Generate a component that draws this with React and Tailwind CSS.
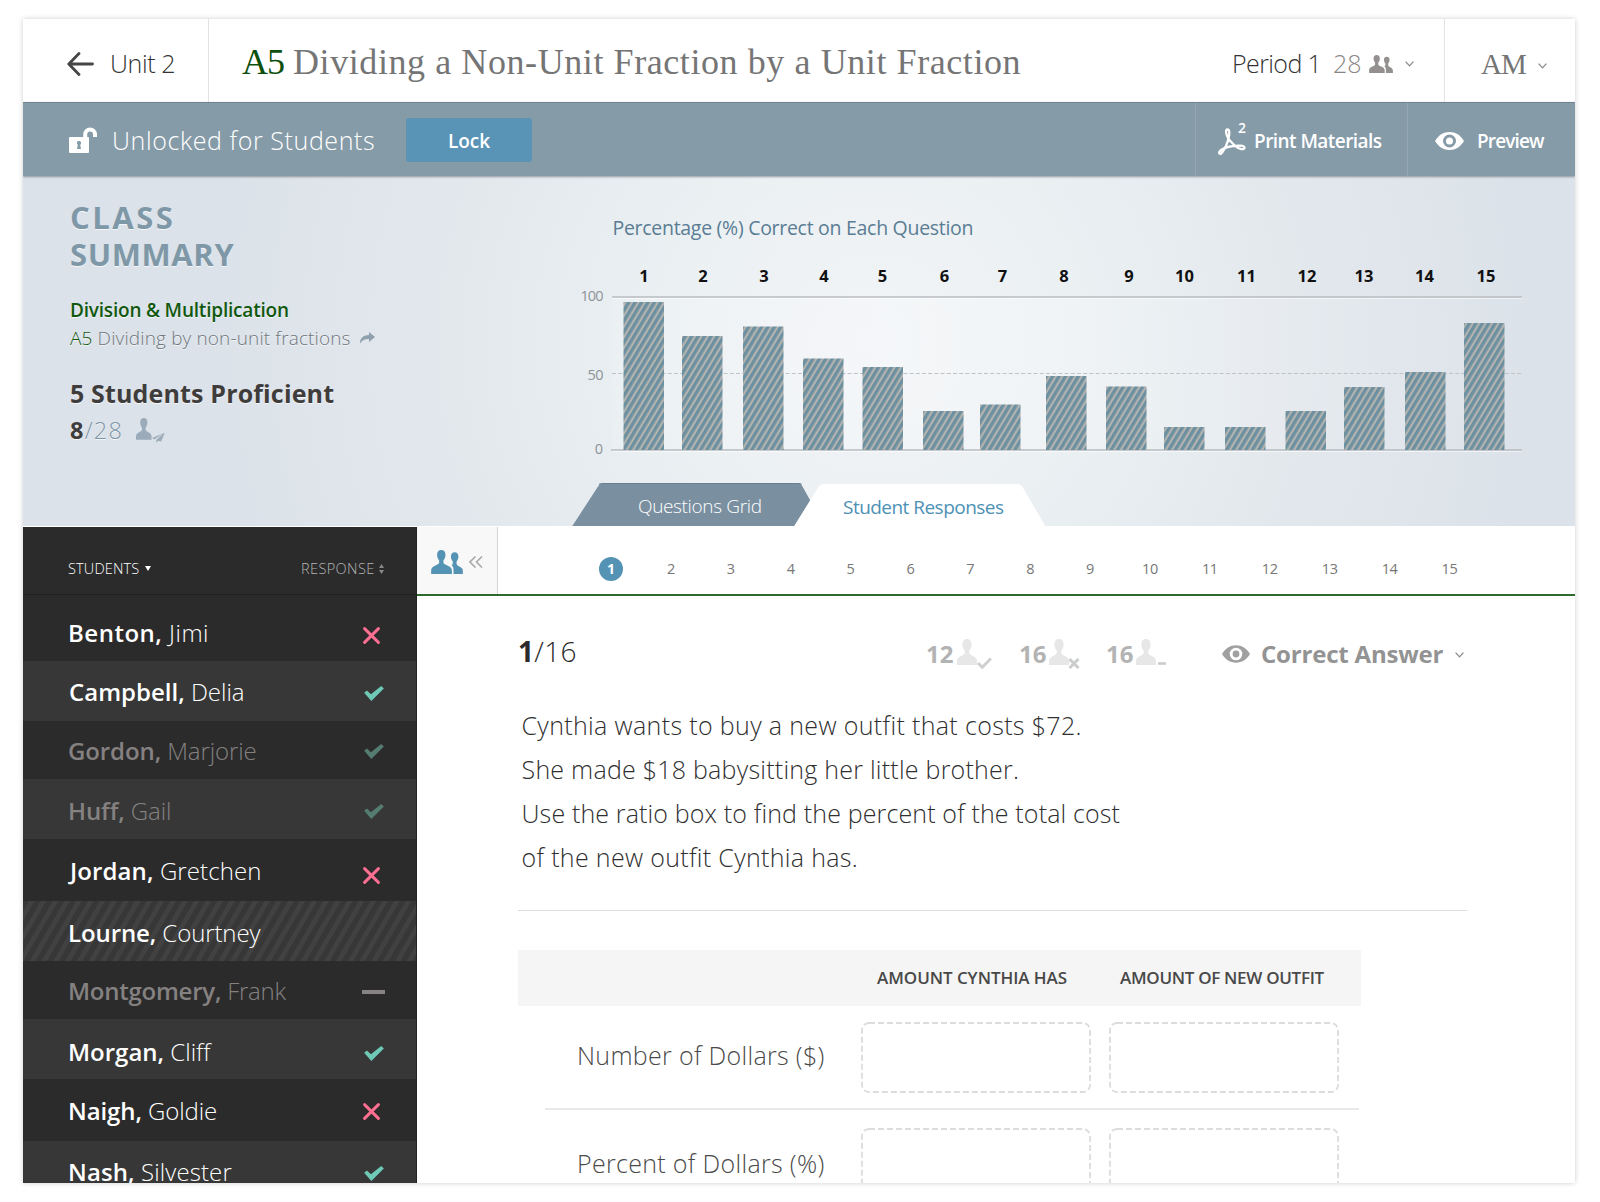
const QUESTIONS = [
  { n: 1, cx: 644, x: 623.5, top: 302 },
  { n: 2, cx: 703, x: 682, top: 336 },
  { n: 3, cx: 764, x: 743, top: 326.5 },
  { n: 4, cx: 824, x: 803, top: 358.5 },
  { n: 5, cx: 882.5, x: 862.5, top: 367 },
  { n: 6, cx: 944.5, x: 923, top: 411 },
  { n: 7, cx: 1002.5, x: 980, top: 404.5 },
  { n: 8, cx: 1064, x: 1046, top: 376 },
  { n: 9, cx: 1129, x: 1106, top: 386.5 },
  { n: 10, cx: 1184.5, x: 1164, top: 427 },
  { n: 11, cx: 1246.5, x: 1225, top: 427 },
  { n: 12, cx: 1307, x: 1285.5, top: 411 },
  { n: 13, cx: 1364, x: 1344, top: 387 },
  { n: 14, cx: 1424.5, x: 1405, top: 372 },
  { n: 15, cx: 1486, x: 1464, top: 323 },
];

const STUDENTS = [
  { last: 'Benton', first: 'Jimi', mark: 'cross', row: 'h-[66px] pt-[9px] bg-[#2b2b2b]', name: 'tracking-[0.5px]', markClass: 'mt-[5px]' },
  { last: 'Campbell', first: 'Delia', mark: 'check', row: 'h-[60px] bg-[#373737]', name: 'pl-px', markClass: 'mt-[5px]' },
  { last: 'Gordon', first: 'Marjorie', mark: 'check', dim: true, row: 'h-[58px] bg-[#2b2b2b]', name: 'tracking-[-0.1px]' },
  { last: 'Huff', first: 'Gail', mark: 'check', dim: true, row: 'h-[60px] pt-[2px] bg-[#373737]', name: 'tracking-[-0.1px]' },
  { last: 'Jordan', first: 'Gretchen', mark: 'cross', row: 'h-[62px] pt-[1px] bg-[#2b2b2b]', name: 'pl-[2px] tracking-[0.1px]', markClass: 'mt-[9px]' },
  { last: 'Lourne', first: 'Courtney', row: 'h-[60px] pt-[2px] bg-[repeating-linear-gradient(120deg,#373737_0_5px,#414141_5.5px_9.8px,#373737_10.2px)]', name: 'tracking-[-0.1px]' },
  { last: 'Montgomery', first: 'Frank', mark: 'dash', dim: true, row: 'h-[58px] bg-[#2b2b2b]', name: 'tracking-[-0.25px]' },
  { last: 'Morgan', first: 'Cliff', mark: 'check', row: 'h-[60px] pt-[4px] bg-[#373737]', name: '', markClass: 'mt-[5px]' },
  { last: 'Naigh', first: 'Goldie', mark: 'cross', row: 'h-[62px] bg-[#2b2b2b]', name: 'tracking-[-0.1px]' },
  { last: 'Nash', first: 'Silvester', mark: 'check', row: 'h-[60px] bg-[#373737]', name: 'tracking-[0.1px]', markClass: 'mt-[5px]' },
];

const BUST = 'M10 0c-3 0-4.6 2-4.6 5.2 0 2.800 1 5 2.300 6.300v2.600C7.300 16.800 0 17.200 0 22v4h20v-4c0-4.800-7.300-5.200-7.700-7.900v-2.600c1.300-1.300 2.300-3.500 2.300-6.300C14.600 2 13 0 10 0z';

function People({ className }) {
  return (
    <svg className={className} viewBox="0 0 33 25" fill="currentColor">
      <path d="M10.500 0C7.700 0 6.200 1.900 6.200 5c0 2.600.9 4.500 2.100 5.700v2.600C7.800 16 0 16.300 0 21v4h21.600v-4c0-4.700-8.300-5-8.800-7.700v-2.600c1.200-1.200 2.100-3.100 2.100-5.700 0-3.100-1.500-5-4.400-5z" />
      <path d="M24.500 2.300c-2.500 0-3.900 1.700-3.900 4.400 0 2.300.8 3.900 1.900 5v2.600c0 .5-.5 1-1.200 1.400 1.300 1.200 2 2.800 2 5.300v4H33v-3.700c0-3.700-6-4-6.500-7v-2.600c1.100-1.100 1.900-2.700 1.900-5 0-2.700-1.400-4.400-3.900-4.400z" />
    </svg>
  );
}

function Person({ badge }) {
  return (
    <svg className="w-[35px] h-[30px] shrink-0" viewBox="0 0 35 30" fill="none">
      <path d={BUST} fill="#e7e7e7" />
      {badge === 'check' && <path d="M21 24l4.200 4.200L34 19.500" stroke="#cfcfcf" strokeWidth="3" />}
      {badge === 'cross' && <path d="M20.500 20l9 9m0-9l-9 9" stroke="#cbcccd" strokeWidth="3" />}
      {badge === 'dash' && <path d="M22 24.500h8" stroke="#cbcccd" strokeWidth="2.600" />}
    </svg>
  );
}

function Eye({ className, hole }) {
  return (
    <svg className={className} viewBox="0 0 29 18">
      <path d="M0 9C3.500 3.200 8.500 0 14.500 0S25.500 3.200 29 9c-3.500 5.800-8.500 9-14.500 9S3.500 14.800 0 9z" fill="currentColor" />
      <circle cx="14.500" cy="9" r="5" fill="none" stroke={hole} strokeWidth="3" />
    </svg>
  );
}

function Chevron({ className }) {
  return (
    <svg className={className} width="9" height="6" viewBox="0 0 9 6" fill="none" stroke="currentColor" strokeWidth="1.300">
      <path d="M.6.6l3.900 4.300L8.400.6" />
    </svg>
  );
}

function Mark({ type, dim }) {
  if (type === 'cross') {
    return (
      <svg className="block w-[17px] h-[17px]" viewBox="0 0 17 17" stroke="#ff6f91" strokeWidth="2.900" strokeLinecap="round">
        <path d="M1.600 1.600l13.800 13.800M15.400 1.600L1.600 15.400" />
      </svg>
    );
  }
  if (type === 'check') {
    return (
      <svg className="block ml-px w-[20px] h-[15px]" viewBox="0 0 21 16" fill={dim ? '#557c71' : '#6ec9b6'}>
        <path d="M0 7.200l3-2.300 4.200 4L18.200 0 21 2.700 7.700 16z" />
      </svg>
    );
  }
  if (type === 'dash') return <div className="-ml-px w-[23px] h-1 bg-[#878383]" />;
  return null;
}

function Header() {
  return (
    <header className="flex items-center h-[83px] bg-white">
      <div className="flex items-center w-[186px] h-full pl-[44px] pt-[7px] border-r border-[#e3e3e3]">
        <svg className="w-[27px] h-[24px]" viewBox="0 0 27 24" fill="none" stroke="#464646" strokeWidth="2.800" strokeLinecap="round" strokeLinejoin="round">
          <path d="M12 1.500L1.800 12 12 22.500M2 12h23.500" />
        </svg>
        <span className="ml-[16px] text-[25px] font-light text-[#333] tracking-[-0.4px] whitespace-nowrap">Unit 2</span>
      </div>
      <h1 className="flex-1 pl-[33px] pt-[2px] font-['Liberation_Serif',serif] text-[36px] text-[#757575] whitespace-nowrap">
        <span className="inline-block w-[51px] text-[#0d4f0d] tracking-[-1px]">A5</span>
        <span className="tracking-[0.58px]">Dividing a Non-Unit Fraction by a Unit Fraction</span>
      </h1>
      <div className="flex items-center w-[235px] h-full pt-[7px] text-[25px] font-light whitespace-nowrap border-r border-[#e3e3e3]">
        <span className="w-[101px] pl-[22px] box-content text-[#333] tracking-[-0.6px]">Period 1</span>
        <span className="w-[36px] text-[#8b8686]">28</span>
        <People className="w-[24px] h-[18px] text-[#959090]" />
        <Chevron className="ml-[12px] text-[#8a8a8a]" />
      </div>
      <div className="flex items-center w-[130px] h-full pt-[8px] pl-[36px]">
        <span className="w-[57px] font-['Liberation_Serif',serif] text-[29px] text-[#757575] tracking-[-1px]">AM</span>
        <Chevron className="mt-[2px] text-[#8a8a8a]" />
      </div>
    </header>
  );
}

function LockBar() {
  return (
    <div className="relative z-10 flex items-center h-[74px] bg-[#869ba8] border-t border-[#6f8391] shadow-[0_1px_2px_rgba(60,70,80,0.5)] text-white">
      <svg className="ml-[46px] w-[28px] h-[26px]" viewBox="0 0 28 26">
        <rect y="10" width="20" height="16" rx="1" fill="#fff" />
        <path d="M16.200 12V7.500a4.900 4.900 0 0 1 9.800 0V10" fill="none" stroke="#fff" strokeWidth="4" />
        <path d="M10 14a2 2 0 0 1 1.200 3.700l.8 4.300H8l.8-4.300A2 2 0 0 1 10 14z" fill="#869ba8" />
      </svg>
      <span className="ml-[15px] w-[294px] pt-[3px] text-[25px] font-light tracking-[0.6px] whitespace-nowrap">Unlocked for Students</span>
      <button className="w-[126px] h-[44px] mt-px pt-[3px] rounded-[3px] bg-[#5994b6] text-[19px] font-semibold">Lock</button>
      <div className="flex-1" />
      <div className="flex items-center w-[212px] h-full pl-[22px] border-l border-[#94a7b3]">
        <svg className="w-[28px] h-[28px] mt-[4px]" viewBox="0 0 28 28" fill="none" stroke="#fff" strokeWidth="2.300" strokeLinejoin="round">
          <path d="M9.800 9.500C8 6 7.200 1.500 9.500 1.500s2 4 1.200 8c-1.200 6-4.200 12-7 15.500-1.200 1.500-3.200.8-2.300-1.200 1.300-2.600 7.600-4.800 13-5.700 4.800-.8 12.100-1 12.100 1.600s-5.500 1.500-9-1.600c-3.300-2.900-6.200-5.900-7.700-8.600z" />
        </svg>
        <span className="-ml-[8px] -mt-[25px] w-[16px] text-[14px] font-semibold">2</span>
        <span className="pt-[4px] text-[19px] font-semibold tracking-[-0.55px] whitespace-nowrap">Print Materials</span>
      </div>
      <div className="flex items-center w-[168px] h-full pl-[27px] border-l border-[#94a7b3]">
        <Eye className="mt-[3px] w-[29px] h-[18px]" hole="#869ba8" />
        <span className="ml-[13px] pt-[3px] text-[19px] font-semibold tracking-[-0.85px]">Preview</span>
      </div>
    </div>
  );
}

function Chart() {
  return (
    <svg className="block shrink-0 w-[960px] h-[350px]" viewBox="565 176 960 350" fontFamily="'Open Sans', sans-serif">
      <defs>
        <pattern id="stripes" width="5.500" height="20" patternUnits="userSpaceOnUse" patternTransform="rotate(31)">
          <rect width="5.500" height="20" fill="#b3b3b1" />
          <rect width="3.300" height="20" fill="#6c909f" />
        </pattern>
        <linearGradient id="plot">
          <stop offset="0" stopColor="#fff" stopOpacity="0.1" />
          <stop offset=".35" stopColor="#fff" stopOpacity="0.25" />
          <stop offset="1" stopColor="#fff" stopOpacity="0" />
        </linearGradient>
      </defs>
      <text x="612.500" y="235" fontSize="19.500" fill="#5a7d93" textLength="361">Percentage (%) Correct on Each Question</text>
      <rect x="612" y="297" width="910" height="153" fill="url(#plot)" />
      <path d="M612 298.500h910M612 451.500h910" stroke="#fff" opacity="0.6" />
      <path d="M612 297h910M611 450h911" stroke="#b9bdc1" strokeWidth="1.500" />
      <path d="M612 373.500h910" stroke="#bfc3c6" strokeDasharray="4 2.200" />
      <g fontSize="14.500" fill="#8e9397" textAnchor="end">
        <text x="603.500" y="301" textLength="23">100</text>
        <text x="603.500" y="380" textLength="16">50</text>
        <text x="603" y="454">0</text>
      </g>
      {QUESTIONS.map((q) => (
        <g key={q.n}>
          <text x={q.cx} y="281.500" fontSize="16.500" fontWeight="700" fill="#111" textAnchor="middle">{q.n}</text>
          <rect x={q.x} y={q.top} width="40.500" height={450 - q.top} fill="url(#stripes)" />
        </g>
      ))}
      {/* tabs */}
      <path d="M572 526.500L598 486.500q1.800-3 5-3h195q3 0 4.500 3l7.800 14-16.300 26z" fill="#7a8fa0" />
      <path d="M599 484.500q1.500-1 4-1h195q2.500 0 3.500 1" fill="none" stroke="#667f93" strokeWidth="1.200" />
      <path d="M794 526.500L818.500 487q1.800-3 5-3h194q3.500 0 5 3l23 39.500z" fill="#fff" />
      <text x="638" y="512.500" fontSize="19" fontWeight="300" fill="#fff" textLength="124">Questions Grid</text>
      <text x="843" y="514" fontSize="19" fill="#4d91b5" textLength="161">Student Responses</text>
    </svg>
  );
}

function Summary() {
  return (
    <section className="flex h-[350px] bg-[radial-gradient(circle_at_850px_165px,#f2f4f7_0,#ebf0f3_210px,#e3e8ed_430px,#dbe2e9_660px)]">
      <div className="w-[542px] shrink-0 pl-[47px] pt-[23px] whitespace-nowrap [text-shadow:0_1px_0_rgba(255,255,255,0.7)]">
        <h2 className="text-[31px] leading-[36.500px] font-bold text-[#7f98a7]">
          <span className="block tracking-[2.500px]">CLASS</span>
          <span className="block tracking-[0.6px]">SUMMARY</span>
        </h2>
        <p className="mt-[24px] text-[19px] leading-[28px] font-semibold tracking-[-0.2px] text-[#11580f]">Division &amp; Multiplication</p>
        <p className="flex items-center text-[19px] leading-[28px] font-light text-[#6f767b]">
          <span className="w-[290px] tracking-[0.13px]"><span className="text-[#11580f]">A5</span> Dividing by non-unit fractions</span>
          <svg className="w-[15px] h-[12px]" viewBox="0 0 15 12" fill="#8fa1ac">
            <path d="M9 0l6 5-6 5V7C5 6.800 2.200 8 0 11.500 0 6 3.500 3 9 3z" />
          </svg>
        </p>
        <p className="mt-[22px] text-[25px] leading-[38px] font-bold tracking-[0.15px] text-[#3f3c3c]">5 Students Proficient</p>
        <p className="flex items-center mt-px text-[23.500px] leading-[34px]">
          <span className="w-[66px] tracking-[1.2px]"><b className="text-[#3f3c3c]">8</b><span className="font-light text-[#7f95a8]">/28</span></span>
          <svg className="w-[29px] h-[25px]" viewBox="0 0 29 25" fill="#9cabb9">
            <path transform="scale(.78 .84)" d={BUST} />
            <path d="M29 14.500L15.500 20l3 1.500L26 16.500l-6 5.500v3l2.200-2 3 .8z" stroke="#dbe2e9" strokeWidth=".4" />
          </svg>
        </p>
      </div>
      <Chart />
    </section>
  );
}

function Sidebar() {
  return (
    <aside className="w-[394px] shrink-0 bg-[#2b2b2b] text-white border-r border-[#222]">
      <div className="flex items-center h-[68px] pl-[45px] pt-[16px] text-[14.500px] font-light border-b border-[#212121] whitespace-nowrap">
        <span className="w-[77px] tracking-[0.15px]">STUDENTS</span>
        <svg className="w-[6px] h-[5px]" viewBox="0 0 6 5" fill="#fff"><path d="M0 0h6L3 5z" /></svg>
        <span className="ml-[150px] w-[78px] tracking-[0.4px] text-[#b5b5b5]">RESPONSE</span>
        <svg className="w-[5px] h-[10px]" viewBox="0 0 5 10" fill="#888"><path d="M2.500 0L5 4H0zM0 6h5l-2.500 4z" /></svg>
      </div>
      {STUDENTS.map((s) => (
        <div key={s.last} className={`flex items-center pl-[45px] text-[24px] whitespace-nowrap ${s.row} ${s.dim ? 'text-[#858181]' : 'text-white'}`}>
          <span className={`w-[295px] pt-px ${s.name}`}>
            <span className="font-semibold">{s.last},</span> <span className="font-light">{s.first}</span>
          </span>
          <div className={s.markClass || 'mt-[3px]'}><Mark type={s.mark} dim={s.dim} /></div>
        </div>
      ))}
    </aside>
  );
}

function QuestionNav() {
  return (
    <nav className="flex h-[69px] border-b-2 border-[#2d6a2d]">
      <div className="flex items-center w-[81px] bg-[#f8f8f8] border-r border-[#d6d6d6] pl-[14px] pb-px pt-[3px]">
        <People className="w-[32px] h-[24px] text-[#5593b5]" />
        <svg className="ml-[6px] w-[14px] h-[12px]" viewBox="0 0 14 12" fill="none" stroke="#a9a9a9" strokeWidth="1.600">
          <path d="M6.500.5L1 6l5.500 5.500M13 .5L7.500 6l5.500 5.500" />
        </svg>
      </div>
      <div className="flex items-center pl-[83px] pt-[16px]">
        {QUESTIONS.map((q) => (
          <div key={q.n} className="w-[59.900px] flex justify-center">
            <span className={q.n === 1
              ? 'flex items-center justify-center w-6 h-6 rounded-full bg-[#5593b5] text-white text-[14px] font-bold'
              : 'text-[14.500px] tracking-[-0.4px] text-[#777]'}
            >
              {q.n}
            </span>
          </div>
        ))}
      </div>
    </nav>
  );
}

function AnswerBox() {
  return (
    <svg className="block w-[230px] h-[71px]" viewBox="0 0 230 71" fill="none">
      <rect x="1" y="1" width="228" height="69" rx="7" stroke="#dcdcdc" strokeWidth="1.800" strokeDasharray="6 3" />
    </svg>
  );
}

function Question() {
  return (
    <div className="pl-[101px]">
      <div className="flex items-center h-[47px] mt-[34px] whitespace-nowrap text-[24px] font-bold text-[#b3b3b3]">
        <span className="w-[408px] pb-[5px] text-[28px] tracking-[0.3px] font-light text-[#2b2b2b]"><b className="font-bold">1</b>/16</span>
        <span className="w-[31px]">12</span>
        <Person badge="check" />
        <span className="ml-[27px] w-[30px]">16</span>
        <Person badge="cross" />
        <span className="ml-[22px] w-[30px]">16</span>
        <Person badge="dash" />
        <Eye className="ml-[51px] w-[28px] h-[18px] text-[#a0a0a0]" hole="#fff" />
        <span className="ml-[11px] w-[194px] tracking-[-0.2px] text-[#939393]">Correct Answer</span>
        <Chevron className="mt-[3px] text-[#8a8a8a]" />
      </div>
      <div className="pl-[3.500px] mt-[26px] w-[949px] h-[208px] text-[25px] leading-[44px] font-light text-[#2f2f2f] border-b border-[#dcdcdc]">
        <p className="tracking-[0.35px]">Cynthia wants to buy a new outfit that costs $72.</p>
        <p className="tracking-[0.24px]">She made $18 babysitting her little brother.</p>
        <p className="tracking-[0.14px]">Use the ratio box to find the percent of the total cost</p>
        <p className="tracking-[0.33px]">of the new outfit Cynthia has.</p>
      </div>
      <div className="flex items-center mt-[39px] w-[843px] h-[56px] bg-[#f5f5f5] text-[17px] font-semibold text-[#484848] whitespace-nowrap">
        <span className="ml-[359px] w-[243px] tracking-[-0.05px]">AMOUNT CYNTHIA HAS</span>
        <span className="tracking-[-0.3px]">AMOUNT OF NEW OUTFIT</span>
      </div>
      <div className="flex ml-[27px] w-[814px] h-[104px] pt-[16px] border-b-2 border-[#e9e9e9]">
        <span className="w-[316px] pl-[32px] pt-[15px] text-[25px] font-light tracking-[0.32px] text-[#4a4a4a]">Number of Dollars ($)</span>
        <AnswerBox />
        <div className="w-[18px]" />
        <AnswerBox />
      </div>
      <div className="flex ml-[27px] w-[814px] pt-[18px]">
        <span className="w-[316px] pl-[32px] pt-[17px] text-[25px] font-light tracking-[0.32px] text-[#4a4a4a]">Percent of Dollars (%)</span>
        <AnswerBox />
        <div className="w-[18px]" />
        <AnswerBox />
      </div>
    </div>
  );
}

export default function App() {
  return (
    <div className="w-[1600px] h-[1202px] overflow-hidden bg-white pl-[23px] pt-[19px] font-['Open_Sans',sans-serif]">
      <div className="flex flex-col w-[1552px] h-[1164px] overflow-hidden bg-white shadow-[0_0_5px_rgba(0,0,0,0.2)]">
        <Header />
        <LockBar />
        <Summary />
        <div className="flex h-[657px] pt-px overflow-hidden">
          <Sidebar />
          <main className="flex-1">
            <QuestionNav />
            <Question />
          </main>
        </div>
      </div>
    </div>
  );
}
